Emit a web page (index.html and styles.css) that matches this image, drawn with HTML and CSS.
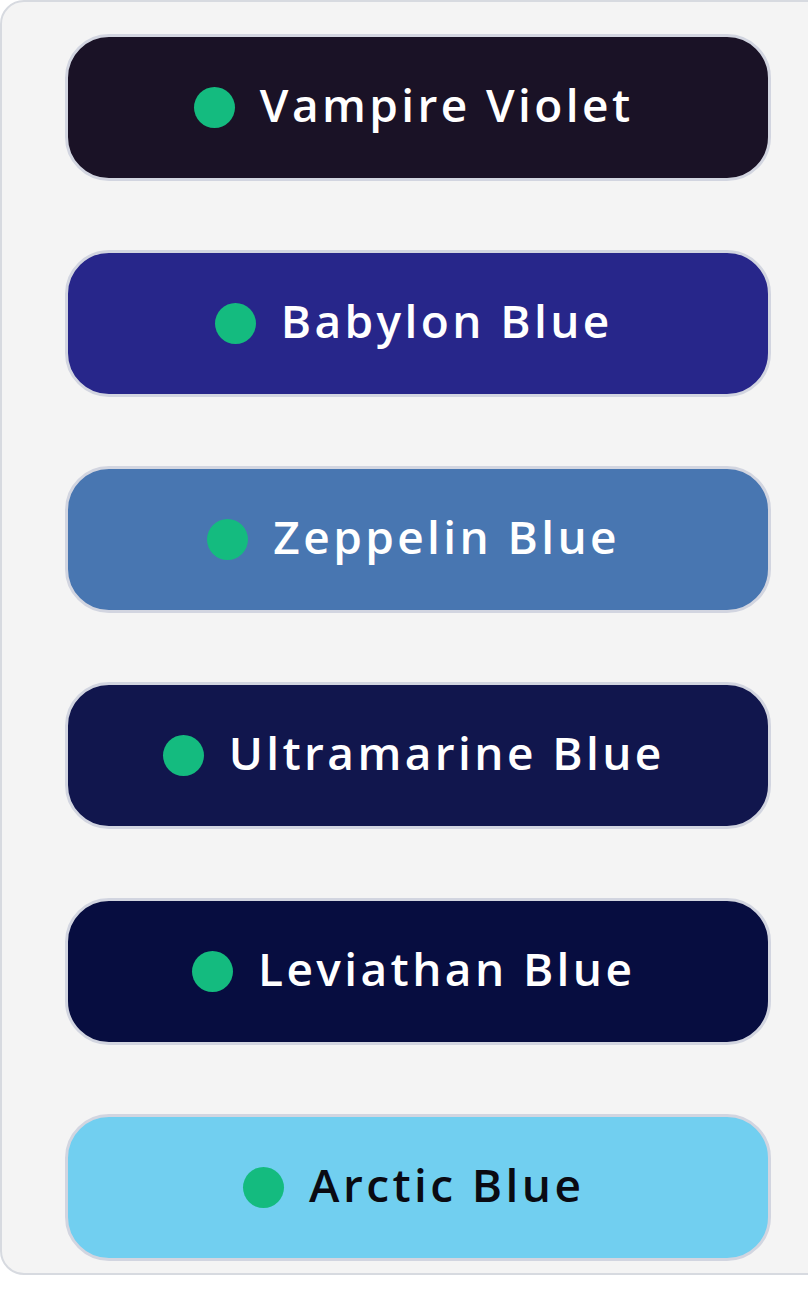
FILE: index.html
```html
<!DOCTYPE html>
<html lang="en">
<head>
<meta charset="utf-8">
<title>Colors</title>
<link rel="stylesheet" href="styles.css">
</head>
<body>
<div class="panel">
  <div class="chip vampire"><span class="dot"></span><span class="label">Vampire Violet</span></div>
  <div class="chip babylon"><span class="dot"></span><span class="label">Babylon Blue</span></div>
  <div class="chip zeppelin"><span class="dot"></span><span class="label">Zeppelin Blue</span></div>
  <div class="chip ultramarine"><span class="dot"></span><span class="label">Ultramarine Blue</span></div>
  <div class="chip leviathan"><span class="dot"></span><span class="label">Leviathan Blue</span></div>
  <div class="chip arctic"><span class="dot"></span><span class="label">Arctic Blue</span></div>
</div>
</body>
</html>
```
FILE: styles.css
```css
html, body {
  margin: 0;
  padding: 0;
  background: #ffffff;
}
body {
  font-family: "Open Sans", "DejaVu Sans", sans-serif;
  overflow: hidden;
}
.panel {
  box-sizing: border-box;
  width: 840px;
  height: 1275px;
  background: #f4f4f4;
  border: 2px solid #d7dae0;
  border-radius: 24px;
  padding: 32px 0 0 63px;
  display: flex;
  flex-direction: column;
  gap: 69px;
}
.chip {
  box-sizing: border-box;
  width: 706px;
  height: 147px;
  border: 3px solid #d2d5e0;
  border-radius: 44px;
  display: flex;
  align-items: center;
  justify-content: center;
  gap: 25px;
  padding-right: 12px;
  color: #ffffff;
}
.dot {
  width: 41px;
  height: 41px;
  border-radius: 50%;
  background: #14bb7f;
  flex: none;
}
.label {
  font-size: 46px;
  font-weight: 600;
  letter-spacing: 3.4px;
  margin-right: -3.4px;
  line-height: 1;
  padding-bottom: 7px;
}
.vampire { background: #1a1226; }
.babylon { background: #27268a; }
.zeppelin { background: #4876b1; }
.ultramarine { background: #11164d; }
.leviathan { background: #070d40; }
.arctic { background: #71cff0; color: #0a0a12; }
```
